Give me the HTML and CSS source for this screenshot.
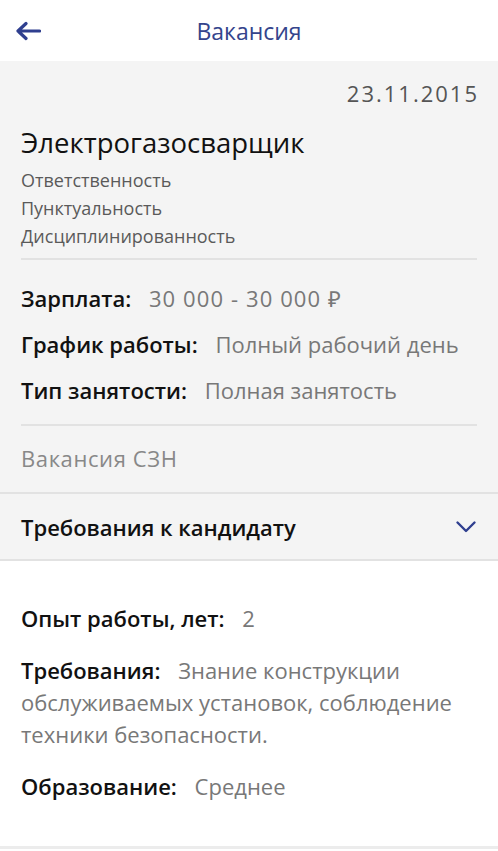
FILE: index.html
```html
<!DOCTYPE html>
<html lang="ru">
<head>
  <meta charset="UTF-8" />
  <meta name="viewport" content="width=device-width, initial-scale=1.0" />
  <title>Вакансия</title>
  <link rel="stylesheet" href="styles.css">
</head>
<body>

  <!-- Top bar -->
  <header class="topbar">
    <button class="back" aria-label="Назад">
      <svg width="26" height="20" viewBox="0 0 26 20">
        <path d="M24.5 10H3M11 2.5L3 10l8 7.5" fill="none" stroke="#2f3f8f" stroke-width="3.2" stroke-linecap="round" stroke-linejoin="round"/>
      </svg>
    </button>
    <h1>Вакансия</h1>
  </header>

  <!-- Vacancy summary -->
  <section class="summary">
    <div class="date">23.11.2015</div>
    <h2 class="position">Электрогазосварщик</h2>
    <ul class="skills">
      <li>Ответственность</li>
      <li>Пунктуальность</li>
      <li>Дисциплинированность</li>
    </ul>

    <div class="facts">
      <div class="fact"><span class="label">Зарплата:</span> <span class="value num">30 000 - 30 000 ₽</span></div>
      <div class="fact"><span class="label">График работы:</span> <span class="value">Полный рабочий день</span></div>
      <div class="fact"><span class="label">Тип занятости:</span> <span class="value">Полная занятость</span></div>
    </div>

    <div class="source">Вакансия СЗН</div>
  </section>

  <!-- Requirements accordion -->
  <div class="accordion">
    <span>Требования к кандидату</span>
    <svg width="22" height="14" viewBox="0 0 22 14">
      <path d="M2.5 2.5l8.5 8.5 8.5-8.5" fill="none" stroke="#2f3f8f" stroke-width="2.4" stroke-linecap="round" stroke-linejoin="round"/>
    </svg>
  </div>

  <section class="details">
    <p><span class="label">Опыт работы, лет:</span> <span class="num">2</span></p>
    <p><span class="label">Требования:</span> Знание конструкции обслуживаемых установок, соблюдение техники безопасности.</p>
    <p><span class="label">Образование:</span> Среднее</p>
  </section>

</body>
</html>
```

FILE: styles.css
```css
body {
  margin: 0;
  background: #ffffff;
  font-family: "Open Sans", sans-serif;
  color: #111;
}

.topbar {
  height: 61px;
  display: flex;
  align-items: center;
  justify-content: center;
  position: relative;
  background: #fff;
}

.back {
  position: absolute;
  left: 15px;
  top: 21px;
  border: none;
  background: none;
  padding: 0;
  line-height: 0;
}

.topbar h1 {
  margin: 0;
  font-size: 23px;
  font-weight: 400;
  color: #34448c;
}

.summary {
  background: #f4f4f4;
  padding: 17px 21px 0;
  border-bottom: 2px solid #e2e2e2;
}

.date {
  text-align: right;
  font-size: 22px;
  line-height: 30px;
  letter-spacing: 2px;
  margin-right: -2px;
  color: #555;
}

.position {
  margin: 17px 0 5px;
  font-size: 27.5px;
  line-height: 36px;
  font-weight: 500;
}

.skills {
  list-style: none;
  margin: 0;
  padding: 0 0 8px;
  font-size: 18px;
  line-height: 28px;
  color: #5a5a5a;
  border-bottom: 2px solid #e2e2e2;
}

.facts {
  padding: 15px 0 11px;
  border-bottom: 2px solid #e2e2e2;
}

.fact {
  font-size: 22px;
  line-height: 46px;
  white-space: nowrap;
}

.label {
  font-weight: 600;
  color: #111;
  margin-right: 12px;
}

.value {
  color: #787878;
}

.num {
  letter-spacing: 1.1px;
}

.source {
  font-size: 22px;
  line-height: 30px;
  letter-spacing: 0.6px;
  color: #888;
  padding: 17px 0 19px;
}

.accordion {
  background: #f4f4f4;
  height: 65px;
  padding: 0 21px;
  display: flex;
  align-items: center;
  justify-content: space-between;
  font-size: 22px;
  font-weight: 600;
  border-bottom: 2px solid #e2e2e2;
}

.details {
  padding: 41px 21px 44px;
  border-bottom: 3px solid #ececec;
}

.details p {
  margin: 0 0 20px;
  font-size: 22px;
  line-height: 32px;
  color: #787878;
}

.details p:last-child {
  margin-bottom: 0;
}
```
